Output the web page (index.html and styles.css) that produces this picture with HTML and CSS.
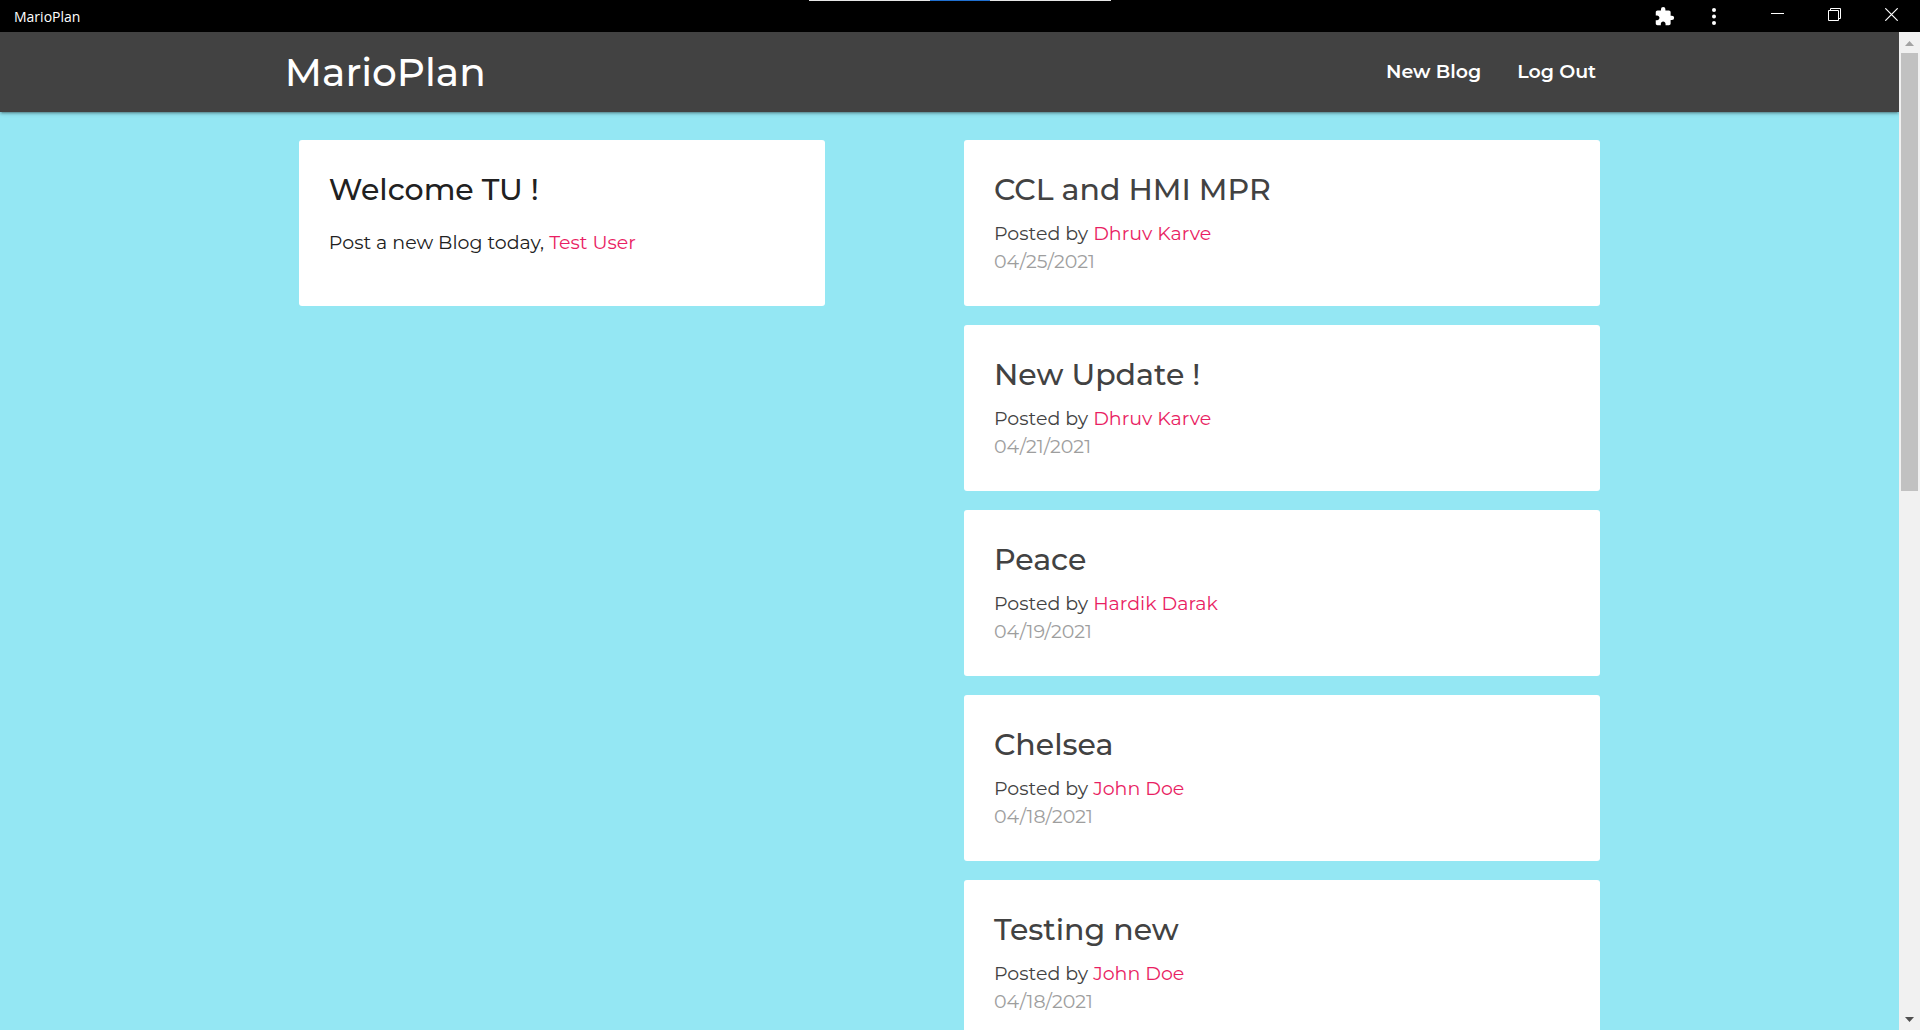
FILE: index.html
```html
<!DOCTYPE html>
<html lang="en">
<head>
<meta charset="utf-8">
<meta name="viewport" content="width=device-width, initial-scale=1">
<title>MarioPlan</title>
<link rel="stylesheet" href="styles.css">
</head>
<body>
<div class="titlebar">
  <span class="titlebar-name">MarioPlan</span>
  <div class="share-bar"></div>
  <div class="titlebar-tools">
    <button class="tool" type="button" aria-label="Extensions"><svg width="21" height="21" viewBox="0 0 24 24" fill="currentColor"><path d="M20.5 11H19V7c0-1.1-.9-2-2-2h-4V3.500a2.500 2.500 0 0 0-5 0V5H4c-1.100 0-1.990.9-1.990 2v3.800H3.500c1.490 0 2.700 1.210 2.700 2.700s-1.210 2.700-2.700 2.700H2V20c0 1.100.9 2 2 2h3.800v-1.500c0-1.490 1.210-2.700 2.700-2.700s2.700 1.210 2.700 2.700V22H17c1.100 0 2-.9 2-2v-4h1.500a2.500 2.500 0 0 0 0-5z"/></svg></button>
    <button class="tool" type="button" aria-label="More options"><svg width="4" height="17" viewBox="0 0 4 17" fill="currentColor"><circle cx="2" cy="2" r="2"/><circle cx="2" cy="8.500" r="2"/><circle cx="2" cy="15" r="2"/></svg></button>
  </div>
  <div class="titlebar-window">
    <button class="win" type="button" aria-label="Minimize"><svg width="13" height="13" viewBox="0 0 13 13" fill="none" stroke="currentColor"><path d="M0 5.500h13"/></svg></button>
    <button class="win" type="button" aria-label="Restore"><svg width="13" height="13" viewBox="0 0 13 13" fill="none" stroke="currentColor"><path d="M.5 2.500h10v10H.5zM2.500 2.500v-2h10v10h-2"/></svg></button>
    <button class="win" type="button" aria-label="Close"><svg width="13" height="13" viewBox="0 0 13 13" fill="none" stroke="currentColor" stroke-width="1.200"><path d="M.3.300l12.400 12.400M12.700.3L.3 12.700"/></svg></button>
  </div>
</div>
<div class="viewport">
  <div class="page">
    <nav class="navbar">
      <div class="container nav-inner">
        <a class="brand" href="#">MarioPlan</a>
        <div class="nav-links">
          <a href="#">New Blog</a>
          <a href="#">Log Out</a>
        </div>
      </div>
    </nav>
    <main class="container dashboard">
      <section class="card welcome">
        <h1 class="card-title">Welcome TU !</h1>
        <p>Post a new Blog today, <span class="author">Test User</span></p>
      </section>
      <section class="posts">
        <a class="card post" href="#">
          <h2 class="card-title">CCL and HMI MPR</h2>
          <p>Posted by <span class="author">Dhruv Karve</span></p>
          <p class="date">04/25/2021</p>
        </a>
        <a class="card post" href="#">
          <h2 class="card-title">New Update !</h2>
          <p>Posted by <span class="author">Dhruv Karve</span></p>
          <p class="date">04/21/2021</p>
        </a>
        <a class="card post" href="#">
          <h2 class="card-title">Peace</h2>
          <p>Posted by <span class="author">Hardik Darak</span></p>
          <p class="date">04/19/2021</p>
        </a>
        <a class="card post" href="#">
          <h2 class="card-title">Chelsea</h2>
          <p>Posted by <span class="author">John Doe</span></p>
          <p class="date">04/18/2021</p>
        </a>
        <a class="card post" href="#">
          <h2 class="card-title">Testing new</h2>
          <p>Posted by <span class="author">John Doe</span></p>
          <p class="date">04/18/2021</p>
        </a>
      </section>
    </main>
  </div>
  <div class="scrollbar" aria-hidden="true">
    <svg class="arrow" width="21" height="21" viewBox="0 0 21 21" fill="#a3a3a3"><path d="M6 14h9L10.500 9z"/></svg>
    <div class="track"><div class="thumb"></div></div>
    <svg class="arrow" width="21" height="21" viewBox="0 0 21 21" fill="#505050"><path d="M6 8h9l-4.500 5z"/></svg>
  </div>
</div>
</body>
</html>
```
FILE: styles.css
```css
* { box-sizing: border-box; }

body {
  margin: 0;
  height: 100vh;
  display: flex;
  flex-direction: column;
  overflow: hidden;
  font-family: Montserrat, Inter, sans-serif;
  font-size: 19px;
  line-height: 28px;
  color: #212121;
}

h1, h2, p { margin: 0; }
a { color: inherit; text-decoration: none; }

/* window title bar */
.titlebar {
  position: relative;
  flex: none;
  height: 32px;
  display: flex;
  align-items: center;
  background: #000;
  color: #fff;
}
.titlebar-name {
  flex: 1;
  padding: 2px 0 0 14px;
  font-family: "Segoe UI", "Open Sans", sans-serif;
  font-size: 14px;
}
.share-bar {
  position: absolute;
  top: 0;
  left: 50%;
  width: 302px;
  height: 1px;
  transform: translateX(-50%);
  background: linear-gradient(90deg, #e6e6e6 40%, #1f6fd0 40% 60%, #e6e6e6 60%);
}
.titlebar-tools, .titlebar-window { display: flex; height: 100%; }
.titlebar-tools { margin-right: 10px; }
.titlebar button {
  display: flex;
  justify-content: center;
  padding: 0;
  border: 0;
  background: none;
  color: inherit;
}
.titlebar .tool { width: 50px; align-items: center; }
.titlebar .win { width: 57px; padding-top: 8px; }

.viewport { flex: 1; min-height: 0; display: flex; }
.page {
  flex: 1;
  overflow: hidden;
  background: #94e7f3;
}
.container { width: 70%; margin: 0 auto; }

.navbar {
  background: #424242;
  color: #fff;
  box-shadow: 0 2px 2px rgba(0, 0, 0, .14), 0 3px 1px -2px rgba(0, 0, 0, .12), 0 1px 5px rgba(0, 0, 0, .2);
}
.nav-inner {
  display: flex;
  align-items: center;
  justify-content: space-between;
  height: 80px;
}
.brand { font-size: 39px; line-height: 80px; font-weight: 500; }
.nav-links { display: flex; font-weight: 600; }
.nav-links a { padding: 0 18px; }

.dashboard {
  display: grid;
  grid-template-columns: 526fr 636fr;
  column-gap: 139px;
  align-items: start;
  padding: 28px 14px 0;
}
.posts { display: grid; gap: 19px; }
.card {
  display: block;
  min-height: 166px;
  padding: 30px;
  border-radius: 3px;
  background: #fff;
}
.card-title {
  margin-bottom: 10px;
  font-size: 30px;
  line-height: 40px;
  font-weight: 500;
}
.welcome .card-title { margin-bottom: 19px; }
.post { color: #424242; }
.author { color: #e91e63; }
.date { color: #9e9e9e; }

.scrollbar {
  flex: none;
  width: 21px;
  display: flex;
  flex-direction: column;
  background: #f1f1f1;
}
.arrow { flex: none; }
.track { flex: 1; padding: 0 2px; }
.thumb { height: 45.8%; background: #c1c1c1; }
```
